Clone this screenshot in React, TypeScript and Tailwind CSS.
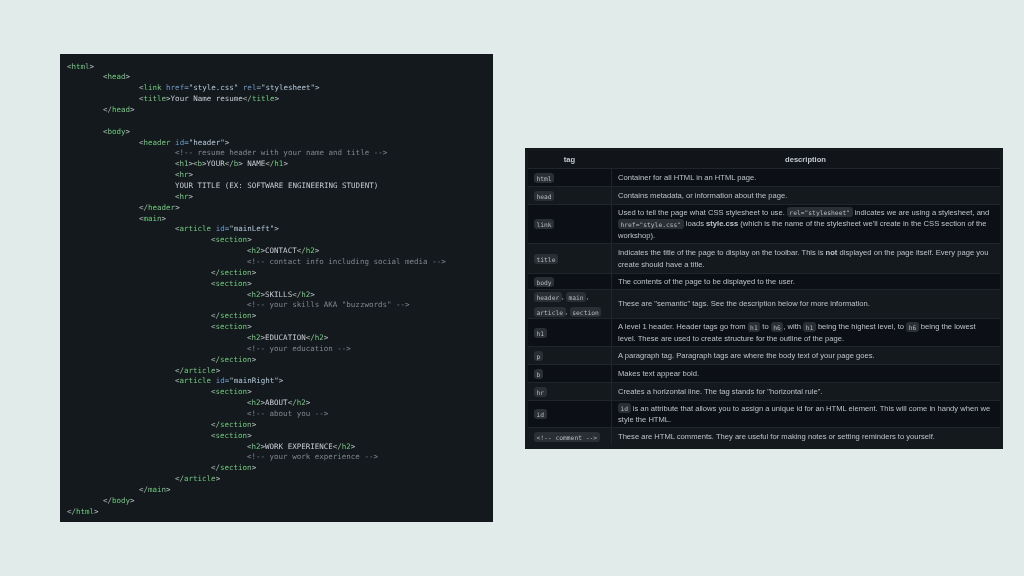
import React from "react";

const code: [number, string][] = [
  [0, "<html>"],
  [1, "<head>"],
  [2, '<link href="style.css" rel="stylesheet">'],
  [2, "<title>Your Name resume</title>"],
  [1, "</head>"],
  [0, ""],
  [1, "<body>"],
  [2, '<header id="header">'],
  [3, "<!-- resume header with your name and title -->"],
  [3, "<h1><b>YOUR</b> NAME</h1>"],
  [3, "<hr>"],
  [3, "YOUR TITLE (EX: SOFTWARE ENGINEERING STUDENT)"],
  [3, "<hr>"],
  [2, "</header>"],
  [2, "<main>"],
  [3, '<article id="mainLeft">'],
  [4, "<section>"],
  [5, "<h2>CONTACT</h2>"],
  [5, "<!-- contact info including social media -->"],
  [4, "</section>"],
  [4, "<section>"],
  [5, "<h2>SKILLS</h2>"],
  [5, '<!-- your skills AKA "buzzwords" -->'],
  [4, "</section>"],
  [4, "<section>"],
  [5, "<h2>EDUCATION</h2>"],
  [5, "<!-- your education -->"],
  [4, "</section>"],
  [3, "</article>"],
  [3, '<article id="mainRight">'],
  [4, "<section>"],
  [5, "<h2>ABOUT</h2>"],
  [5, "<!-- about you -->"],
  [4, "</section>"],
  [4, "<section>"],
  [5, "<h2>WORK EXPERIENCE</h2>"],
  [5, "<!-- your work experience -->"],
  [4, "</section>"],
  [3, "</article>"],
  [2, "</main>"],
  [1, "</body>"],
  [0, "</html>"],
];

const indentClass = ["pl-0", "pl-[36px]", "pl-[72px]", "pl-[108px]", "pl-[144px]", "pl-[180px]"];

function Highlight({ text }: { text: string }) {
  if (text.startsWith("<!--")) return <span className="text-[#7f868e]">{text}</span>;
  const parts = text.split(/(<[^>]+>)/).filter(Boolean);
  return (
    <>
      {parts.map((p, i) => {
        if (!p.startsWith("<")) return <span key={i} className="text-[#c6ccd2]">{p}</span>;
        const m = p.match(/^(<\/?)(\w+)(.*)(>)$/);
        if (!m) return <span key={i}>{p}</span>;
        const attrs = m[3].split(/(\s\w+=)("[^"]*")/).filter(Boolean);
        return (
          <span key={i}>
            <span className="text-[#a3b8a8]">{m[1]}</span>
            <span className="text-[#74c97f]">{m[2]}</span>
            {attrs.map((a, j) =>
              a.startsWith('"') ? (
                <span key={j} className="text-[#b4c8da]">{a}</span>
              ) : (
                <span key={j} className="text-[#7199c4]">{a}</span>
              )
            )}
            <span className="text-[#b9c0c6]">{m[4]}</span>
          </span>
        );
      })}
    </>
  );
}

function C({ children }: { children: React.ReactNode }) {
  return (
    <code className="rounded-[3px] bg-[#2a2f35] px-[2.5px] py-[1.5px] font-['DejaVu_Sans_Mono',monospace] text-[6.3px] leading-none text-[#b4bac1]">
      {children}
    </code>
  );
}

type Row = { h: string; tag: React.ReactNode; desc: React.ReactNode };

const rows: Row[] = [
  { h: "h-[18px]", tag: <C>html</C>, desc: "Container for all HTML in an HTML page." },
  { h: "h-[18px]", tag: <C>head</C>, desc: "Contains metadata, or information about the page." },
  {
    h: "h-[39px]",
    tag: <C>link</C>,
    desc: (
      <>
        Used to tell the page what CSS stylesheet to use. <C>rel="stylesheet"</C> indicates we are using a stylesheet, and{" "}
        <C>href="style.css"</C> loads <b>style.css</b> (which is the name of the stylesheet we'll create in the CSS section of the workshop).
      </>
    ),
  },
  {
    h: "h-[30px]",
    tag: <C>title</C>,
    desc: (
      <>
        Indicates the title of the page to display on the toolbar. This is <b>not</b> displayed on the page itself. Every page you create should have a title.
      </>
    ),
  },
  { h: "h-[16px]", tag: <C>body</C>, desc: "The contents of the page to be displayed to the user." },
  {
    h: "h-[29px]",
    tag: (
      <>
        <C>header</C>, <C>main</C>,<br />
        <C>article</C>, <C>section</C>
      </>
    ),
    desc: 'These are "semantic" tags. See the description below for more information.',
  },
  {
    h: "h-[28px]",
    tag: <C>h1</C>,
    desc: (
      <>
        A level 1 header. Header tags go from <C>h1</C> to <C>h6</C>, with <C>h1</C> being the highest level, to <C>h6</C> being the lowest level. These are used to create structure for the outline of the page.
      </>
    ),
  },
  { h: "h-[18px]", tag: <C>p</C>, desc: "A paragraph tag. Paragraph tags are where the body text of your page goes." },
  { h: "h-[18px]", tag: <C>b</C>, desc: "Makes text appear bold." },
  { h: "h-[18px]", tag: <C>hr</C>, desc: 'Creates a horizontal line. The tag stands for "horizontal rule".' },
  {
    h: "h-[27px]",
    tag: <C>id</C>,
    desc: (
      <>
        <C>id</C> is an attribute that allows you to assign a unique id for an HTML element. This will come in handy when we style the HTML.
      </>
    ),
  },
  { h: "h-[18px]", tag: <C>{"<!-- comment -->"}</C>, desc: "These are HTML comments. They are useful for making notes or setting reminders to yourself." },
];

export default function App() {
  return (
    <div className="flex h-[576px] w-[1024px] items-start gap-[32px] overflow-hidden bg-[#e1ebea] pl-[60px] pt-[54px]">
      <div className="h-[468px] w-[433px] bg-[#14191e] pl-[7px] pt-[7.5px] font-['DejaVu_Sans_Mono',monospace] text-[7.5px] leading-[10.86px] blur-[0.4px]">
        {code.map(([lvl, text], i) => (
          <div key={i} className={`h-[10.86px] whitespace-pre ${indentClass[lvl]}`}>
            <Highlight text={text} />
          </div>
        ))}
      </div>

      <div className="mt-[94px] h-[301px] w-[478px] bg-[#14191e] pl-[3px] pt-[3px] font-['Liberation_Sans',sans-serif] text-[7.6px] leading-[11.5px] text-[#bcc2c8] blur-[0.4px]">
        <div className="flex h-[17px] w-[472px] items-center bg-[#11151a] font-bold text-[#c2c8cf]">
          <div className="w-[83px] text-center">tag</div>
          <div className="flex-1 text-center">description</div>
        </div>
        {rows.map((r, i) => (
          <div key={i} className={`flex w-[472px] border-t border-[#20252b] ${r.h} ${i % 2 === 0 ? "bg-[#0c1016]" : "bg-[#14191e]"}`}>
            <div className="flex w-[84px] shrink-0 items-center border-r border-[#20252b] pl-[6px] leading-[15px]">
              <div>{r.tag}</div>
            </div>
            <div className="flex flex-1 items-center pl-[6px] pr-[8px]">
              <div>{r.desc}</div>
            </div>
          </div>
        ))}
      </div>
    </div>
  );
}
